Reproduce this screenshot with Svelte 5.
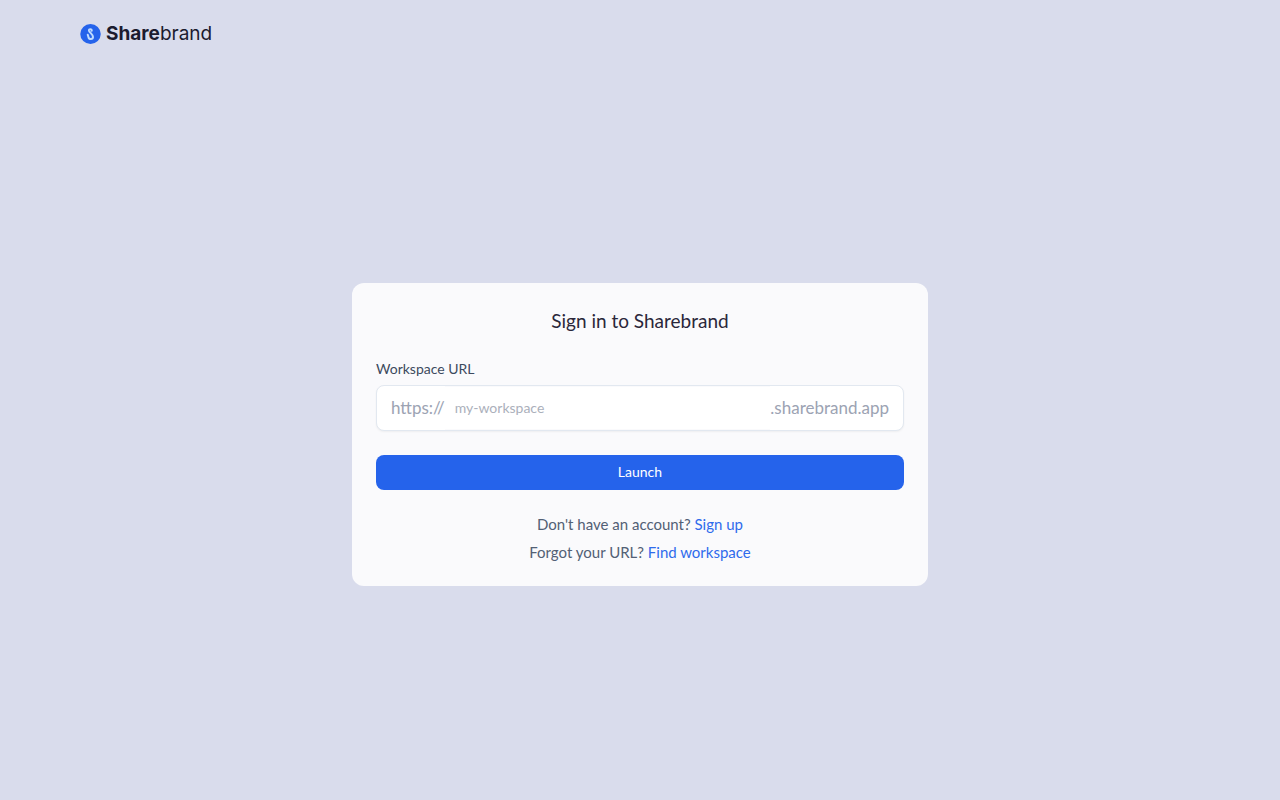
<script lang="ts">
  let workspace = '';

  function handleSubmit(event: SubmitEvent) {
    event.preventDefault();
  }
</script>

<div class="page">
  <header>
    <a class="logo" href="/" aria-label="Sharebrand">
      <svg width="21" height="20" viewBox="0 0 42 40" aria-hidden="true">
        <ellipse cx="21" cy="20" rx="20.5" ry="20" fill="#2563eb" />
        <path
          d="M23.5 13.5C24 9.500 17 9 18 13.500C19 17.500 26 20.500 26 26C26 31.500 18 31.500 17 26.500L15.500 21.500"
          fill="none"
          stroke="#bfdbfe"
          stroke-width="4"
          stroke-linecap="round"
          stroke-linejoin="round"
        />
      </svg>
      <span class="wordmark"><strong>Share</strong>brand</span>
    </a>
  </header>

  <main>
    <section class="card">
      <h1>Sign in to Sharebrand</h1>

      <form on:submit={handleSubmit}>
        <label for="workspace">Workspace URL</label>
        <div class="field">
          <span>https://</span>
          <input id="workspace" type="text" placeholder="my-workspace" bind:value={workspace} />
          <span>.sharebrand.app</span>
        </div>
        <button type="submit">Launch</button>
      </form>

      <div class="links">
        <p>Don't have an account? <a href="/signup">Sign up</a></p>
        <p>Forgot your URL? <a href="/find">Find workspace</a></p>
      </div>
    </section>
  </main>
</div>

<style>
  :global(body) {
    margin: 0;
    background: #d9dcec;
  }

  .page {
    box-sizing: border-box;
    display: flex;
    flex-direction: column;
    min-height: 100vh;
    font-family: Lato, 'Liberation Sans', sans-serif;
    font-size: 14px;
    line-height: 20px;
    color: #526075;
  }

  header {
    padding: 24px 80px;
  }

  .logo {
    display: flex;
    align-items: center;
    gap: 5px;
    width: fit-content;
    height: 20px;
    color: #1b1b2f;
    text-decoration: none;
  }

  .wordmark {
    font-family: Inter, 'Open Sans', sans-serif;
    font-size: 19px;
  }

  .wordmark strong {
    font-weight: 700;
  }

  main {
    flex: 1;
    display: flex;
    align-items: center;
    justify-content: center;
  }

  .card {
    box-sizing: border-box;
    width: 100%;
    max-width: 576px;
    padding: 24px;
    border-radius: 12px;
    background: #fafafc;
  }

  h1 {
    margin: 0 0 24px;
    font-size: 19px;
    font-weight: 400;
    line-height: 28px;
    text-align: center;
    color: #2a273a;
  }

  label {
    display: block;
    margin-bottom: 6px;
    color: #3c4a5e;
  }

  .field {
    display: flex;
    align-items: center;
    box-sizing: border-box;
    height: 46px;
    padding: 0 14px;
    border: 1px solid #e2e8f0;
    border-radius: 8px;
    background: #fff;
    box-shadow: 0 1px 2px rgba(0, 0, 0, 0.05);
    font-size: 17px;
    color: #9ca3b3;
  }

  input {
    flex: 1;
    min-width: 0;
    box-sizing: border-box;
    height: 44px;
    padding: 0 10px;
    border: 1px solid #fafafc;
    border-width: 1px 0;
    background: #fff;
    font: inherit;
    font-size: 14px;
    color: #334155;
    outline: none;
  }

  input::placeholder {
    color: #abb0bb;
    opacity: 1;
  }

  .field:focus-within {
    border-color: #2563eb;
  }

  button {
    display: block;
    width: 100%;
    height: 35px;
    margin-top: 24px;
    padding: 0 16px;
    border: none;
    border-radius: 8px;
    background: #2563eb;
    font: inherit;
    color: #fff;
    cursor: pointer;
  }

  .links {
    display: flex;
    flex-direction: column;
    gap: 8px;
    margin-top: 24px;
    font-size: 15px;
    text-align: center;
  }

  p {
    margin: 0;
  }

  p a {
    color: #2f6bec;
    text-decoration: none;
  }

  p a:hover {
    text-decoration: underline;
  }
</style>
